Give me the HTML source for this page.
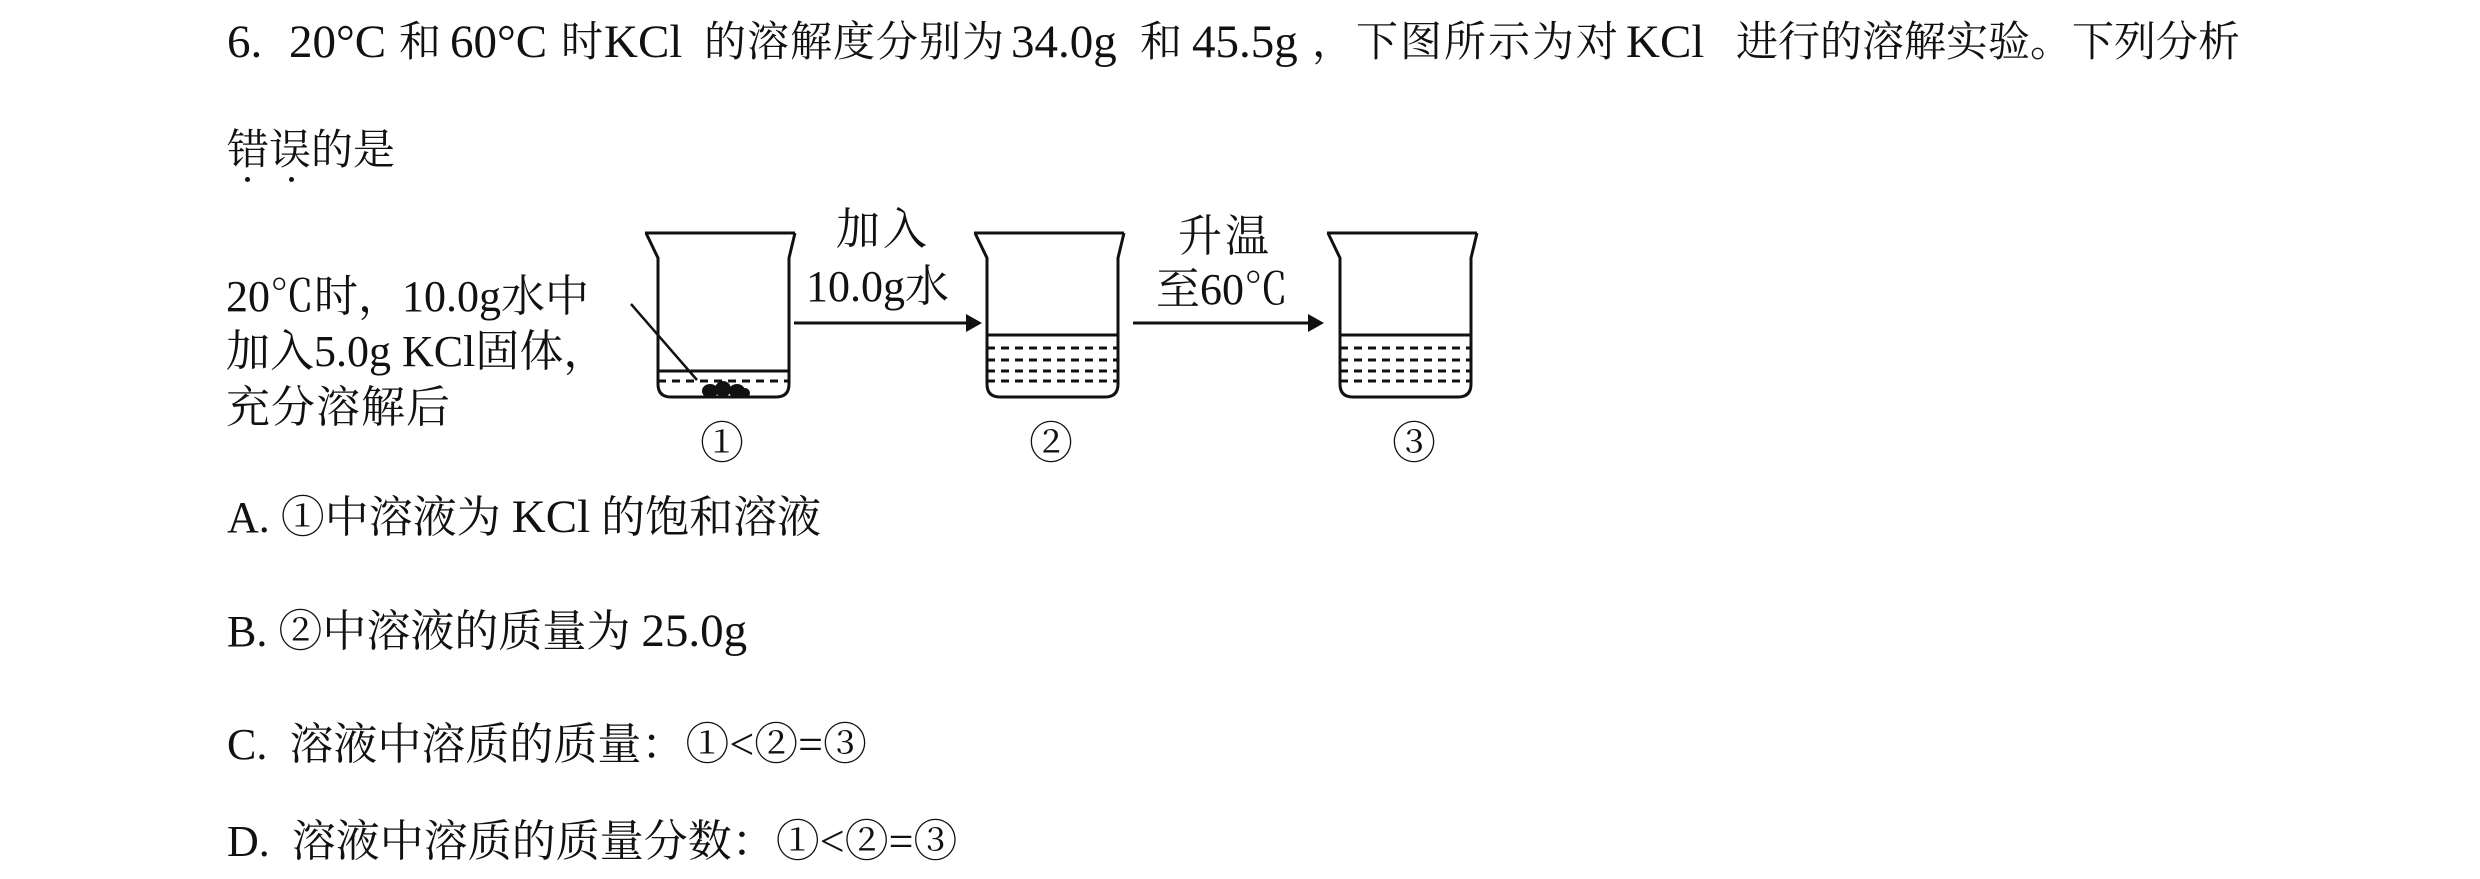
<!DOCTYPE html>
<html><head><meta charset="utf-8">
<style>
html,body{margin:0;padding:0;background:#fff;}
body{width:2480px;height:879px;position:relative;overflow:hidden;font-family:"Liberation Serif","Noto Serif CJK SC",serif;color:#111;}
.t{position:absolute;white-space:nowrap;font-size:42px;line-height:1;}
.l{font-size:47px;top:19px !important;}
.s{font-size:44px;}
.o{font-size:44px;}
.o .l2{font-size:47px;}
</style></head><body>
<!-- line 1 -->
<div class="t l" style="left:227px;top:22px">6.</div>
<div class="t l" style="left:289px;top:22px">20°C</div>
<div class="t" style="left:399px;top:22px">和</div>
<div class="t l" style="left:450px;top:22px">60°C</div>
<div class="t" style="left:561px;top:22px">时</div>
<div class="t l" style="left:604px;top:22px">KCl</div>
<div class="t" style="left:704px;top:22px;letter-spacing:1px">的溶解度分别为</div>
<div class="t l" style="left:1011px;top:22px">34.0g</div>
<div class="t" style="left:1140px;top:22px">和</div>
<div class="t l" style="left:1192px;top:22px">45.5g</div>
<div class="t" style="left:1312px;top:22px;letter-spacing:2px">，下图所示为对</div>
<div class="t l" style="left:1626px;top:22px">KCl</div>
<div class="t" style="left:1736px;top:22px;letter-spacing:0px">进行的溶解实验。下列分析</div>
<!-- line 2 -->
<div class="t" style="left:227px;top:130px">错误的是</div>
<div style="position:absolute;left:245px;top:177px;width:5px;height:5px;border-radius:50%;background:#111"></div>
<div style="position:absolute;left:289px;top:177px;width:5px;height:5px;border-radius:50%;background:#111"></div>
<!-- diagram text -->
<div class="t s" style="left:226px;top:275px">20℃时，10.0g水中</div>
<div class="t s" style="left:226px;top:330px">加入5.0g KCl固体，</div>
<div class="t s" style="left:226px;top:386px;letter-spacing:1px">充分溶解后</div>
<div class="t s" style="left:836px;top:208px;letter-spacing:3px">加入</div>
<div class="t s" style="left:806px;top:265px">10.0g水</div>
<div class="t s" style="left:1178px;top:215px;letter-spacing:3px">升温</div>
<div class="t s" style="left:1156px;top:268px">至60℃</div>
<div class="t s" style="left:700px;top:422px">①</div>
<div class="t s" style="left:1029px;top:422px">②</div>
<div class="t s" style="left:1392px;top:422px">③</div>
<svg style="position:absolute;left:0;top:0" width="2480" height="879">
<g fill="none" stroke="#111" stroke-width="3">
 <path d="M645 233 H795 M646 233 L658 258 V384 Q658 397 671 397 H776 Q789 397 789 384 V258 L795 233"/>
 <path d="M658 371 H789"/>
 <path d="M658 381 H789" stroke-dasharray="8 6"/>
 <path d="M974 233 H1124 M975 233 L987 258 V384 Q987 397 1000 397 H1105 Q1118 397 1118 384 V258 L1124 233"/>
 <path d="M987 335 H1118"/>
 <path d="M987 348 H1118 M987 360 H1118 M987 371 H1118 M987 381 H1118" stroke-dasharray="8 6"/>
 <path d="M1327 233 H1477 M1328 233 L1340 258 V384 Q1340 397 1353 397 H1458 Q1471 397 1471 384 V258 L1477 233"/>
 <path d="M1340 335 H1471"/>
 <path d="M1340 348 H1471 M1340 360 H1471 M1340 371 H1471 M1340 381 H1471" stroke-dasharray="8 6"/>
 <path d="M794 323 H970"/>
 <path d="M1133 323 H1312"/>
 <path d="M631 304 L697 380" stroke-width="2.5"/>
</g>
<path d="M966 314 L982 323 L966 332 Z" fill="#111"/>
<path d="M1308 314 L1324 323 L1308 332 Z" fill="#111"/>
<g fill="#111">
 <ellipse cx="710" cy="391" rx="8" ry="7"/><ellipse cx="723" cy="389" rx="8" ry="8"/><ellipse cx="737" cy="391" rx="8" ry="7"/><ellipse cx="745" cy="393" rx="5" ry="5"/>
</g>
</svg>
<!-- options -->
<div class="t o" style="left:227px;top:494px">A. ①中溶液为 <span class="l2">KCl</span> 的饱和溶液</div>
<div class="t o" style="left:227px;top:608px">B. ②中溶液的质量为 <span class="l2">25.0g</span></div>
<div class="t o" style="left:227px;top:723px">C.&nbsp; 溶液中溶质的质量：①&lt;②=③</div>
<div class="t o" style="left:227px;top:820px">D.&nbsp; 溶液中溶质的质量分数：①&lt;②=③</div>
</body></html>
